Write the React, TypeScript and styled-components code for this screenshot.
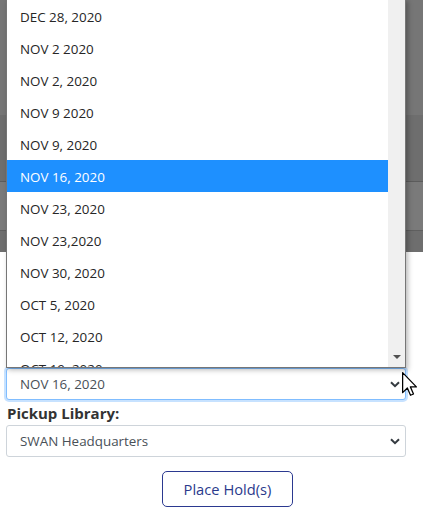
import React from 'react';
import styled, { createGlobalStyle } from 'styled-components';

const GlobalStyle = createGlobalStyle`
  html, body {
    margin: 0;
    padding: 0;
    background: #ffffff;
  }
  body {
    font-family: "Open Sans", "Noto Sans", "Liberation Sans", sans-serif;
    color: #212529;
  }
`;

const dates = [
  'DEC 21, 2020',
  'DEC 28, 2020',
  'NOV 2 2020',
  'NOV 2, 2020',
  'NOV 9 2020',
  'NOV 9, 2020',
  'NOV 16, 2020',
  'NOV 23, 2020',
  'NOV 23,2020',
  'NOV 30, 2020',
  'OCT 5, 2020',
  'OCT 12, 2020',
  'OCT 19, 2020',
];

const selected = 'NOV 16, 2020';

// gray page content dimmed behind the open list
const bands = [
  { h: 115, c: '#767676' },
  { h: 66, c: '#6e6e6e' },
  { h: 1, c: '#5c5c5c' },
  { h: 48, c: '#7a7a7a' },
  { h: 1, c: '#5f5f5f' },
  { h: 21, c: '#6e6e6e' },
];

const App = () => {
  return (
    <Page>
      <GlobalStyle />
      <Backdrop>
        {bands.map((b, i) => (
          <Band key={i} $h={b.h} $c={b.c} />
        ))}
      </Backdrop>

      <Form>
        <Field>
          <Listbox>
            <Options>
              {dates.map((d) => (
                <Option key={d} $active={d === selected}>
                  {d}
                </Option>
              ))}
            </Options>
            <Scrollbar>
              <ScrollArrow />
            </Scrollbar>
          </Listbox>
          <Select $focused>
            <span>{selected}</span>
            <Chevron />
          </Select>
          <Cursor width="15" height="25" viewBox="0 0 12 20">
            <path
              d="M0.5 0.5 L0.5 16.5 L4.3 12.8 L6.8 18.6 L9.2 17.6 L6.7 11.9 L11.5 11.9 Z"
              fill="#ffffff"
              stroke="#000000"
              strokeWidth="1"
              strokeLinejoin="round"
            />
          </Cursor>
        </Field>

        <Label>Pickup Library:</Label>
        <Select>
          <span>SWAN Headquarters</span>
          <Chevron />
        </Select>

        <ButtonRow>
          <HoldButton type="button">Place Hold(s)</HoldButton>
        </ButtonRow>
      </Form>
    </Page>
  );
};

const Chevron = () => (
  <ChevronIcon width="10" height="7" viewBox="0 0 10 7">
    <path d="M1 1.2 L5 5.2 L9 1.2" fill="none" stroke="#343a40" strokeWidth="2" />
  </ChevronIcon>
);

const Page = styled.div`
  width: 423px;
  height: 520px;
  overflow: hidden;
  background: #ffffff;
`;

const Backdrop = styled.div`
  display: flex;
  flex-direction: column;
`;

const Band = styled.div<{ $h: number; $c: string }>`
  height: ${(p) => p.$h}px;
  background: ${(p) => p.$c};
`;

const Form = styled.div`
  display: flex;
  flex-direction: column;
  padding: 116px 17px 0 6px;
`;

const Field = styled.div`
  position: relative;
  display: flex;
  flex-direction: column;
`;

const Listbox = styled.div`
  position: absolute;
  left: 0;
  right: 0;
  bottom: 100%;
  height: 368px;
  display: flex;
  background: #ffffff;
  border: 1px solid #767676;
  border-top: none;
  box-shadow: 2px 2px 5px rgba(0, 0, 0, 0.28);
  overflow: hidden;
  z-index: 2;
`;

const Options = styled.div`
  flex: 1;
  display: flex;
  flex-direction: column;
  margin-top: -31px;
`;

const Option = styled.div<{ $active?: boolean }>`
  flex: 0 0 32px;
  box-sizing: border-box;
  display: flex;
  align-items: center;
  padding: 2px 0 0 13px;
  font-size: 13.4px;
  color: ${(p) => (p.$active ? '#ffffff' : '#262626')};
  background: ${(p) => (p.$active ? '#1e90ff' : 'transparent')};
`;

const Scrollbar = styled.div`
  width: 17px;
  background: #f0f0f0;
  display: flex;
  flex-direction: column;
  justify-content: flex-end;
  align-items: center;
  padding-bottom: 8px;
`;

const ScrollArrow = styled.div`
  width: 0;
  height: 0;
  border-left: 4px solid transparent;
  border-right: 4px solid transparent;
  border-top: 4px solid #505050;
`;

const Select = styled.div<{ $focused?: boolean }>`
  height: 32px;
  box-sizing: border-box;
  display: flex;
  align-items: center;
  justify-content: space-between;
  padding: 0 5px 0 13px;
  font-size: 13.4px;
  color: #495057;
  background: #ffffff;
  border: 1px solid ${(p) => (p.$focused ? '#80bdff' : '#ced4da')};
  border-radius: 3px;
  box-shadow: ${(p) => (p.$focused ? '0 0 0 2px rgba(0, 123, 255, 0.22)' : 'none')};
`;

const ChevronIcon = styled.svg`
  display: block;
`;

const Cursor = styled.svg`
  position: absolute;
  left: 396px;
  top: 4px;
  z-index: 3;
`;

const Label = styled.label`
  margin: 1px 0 0 1px;
  height: 24px;
  line-height: 25px;
  font-size: 15px;
  font-weight: 700;
  color: #333333;
`;

const ButtonRow = styled.div`
  display: flex;
  padding: 14px 0 0 156px;
`;

const HoldButton = styled.button`
  width: 131px;
  height: 36px;
  font-family: "Open Sans", "Noto Sans", "Liberation Sans", sans-serif;
  font-size: 14.7px;
  color: #2b3a8c;
  background: #ffffff;
  border: 1px solid #2b3990;
  border-radius: 5px;
  cursor: pointer;
`;

export default App;
